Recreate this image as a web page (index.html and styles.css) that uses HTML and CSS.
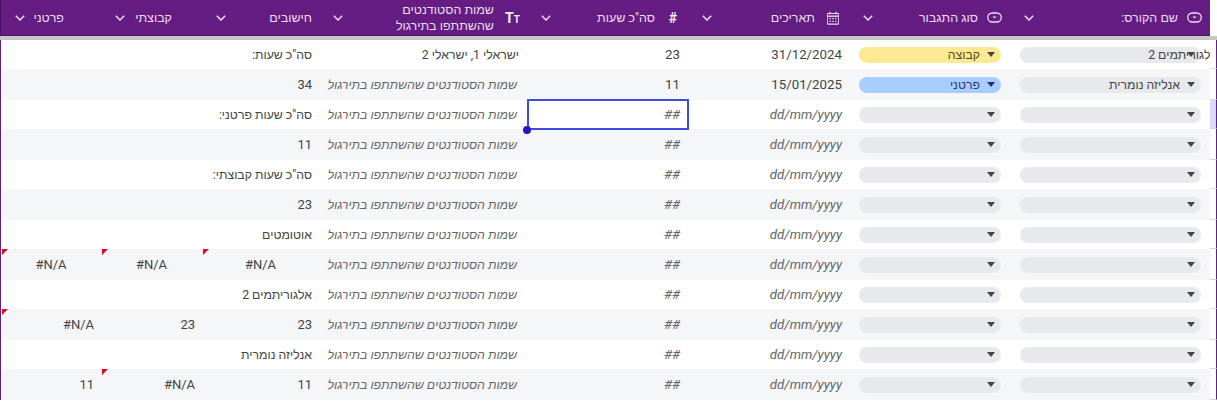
FILE: index.html
```html
<!DOCTYPE html>
<html lang="he" dir="rtl">
<head>
    <meta charset="UTF-8">
    <title>סיכום תירגולים</title>
    <link rel="stylesheet" href="styles.css">
</head>
<body>
    <svg class="defs" width="0" height="0">
        <symbol id="pick" viewBox="0 0 15 11"><rect x="0.75" y="1" width="13.5" height="9" rx="4.5" fill="none" stroke="currentColor" stroke-width="1.3"/><path d="M5.5 4.4h4L7.5 6.6z" fill="currentColor"/></symbol>
        <symbol id="cal" viewBox="0 0 12 14"><path d="M1 2.5h10a.8.8 0 0 1 .8.8v9a.8.8 0 0 1-.8.8H1a.8.8 0 0 1-.8-.8v-9a.8.8 0 0 1 .8-.8z" fill="none" stroke="currentColor" stroke-width="1.1"/><path d="M.5 5.2h11" stroke="currentColor" stroke-width="1.4"/><path d="M3 .8v2.4M9 .8v2.4" stroke="currentColor" stroke-width="1.2"/><path d="M2.5 7h1.4v1.3H2.5zM5.3 7h1.4v1.3H5.3zM8.1 7h1.4v1.3H8.1zM2.5 9.7h1.4V11H2.5zM5.3 9.7h1.4V11H5.3zM8.1 9.7h1.4V11H8.1z" fill="currentColor"/></symbol>
        <symbol id="chev" viewBox="0 0 10 6"><path d="M.8.8 5 5 9.2.8" fill="none" stroke="currentColor" stroke-width="1.5"/></symbol>
    </svg>

    <div class="sheet">
        <div class="head">
            <div class="gutter-top"></div>
            <div class="th"><svg class="ico"><use href="#pick"/></svg><span class="th-text">שם הקורס:</span><svg class="chev"><use href="#chev"/></svg></div>
            <div class="th"><svg class="ico"><use href="#pick"/></svg><span class="th-text">סוג התגבור</span><svg class="chev"><use href="#chev"/></svg></div>
            <div class="th"><svg class="ico ico-cal"><use href="#cal"/></svg><span class="th-text">תאריכים</span><svg class="chev"><use href="#chev"/></svg></div>
            <div class="th"><b class="ico-text">#</b><span class="th-text">סה"כ שעות</span><svg class="chev"><use href="#chev"/></svg></div>
            <div class="th"><b class="ico-text" dir="ltr">T<small>T</small></b><span class="th-text th-wrap">שמות הסטודנטים<br>שהשתתפו בתירגול</span><svg class="chev"><use href="#chev"/></svg></div>
            <div class="th th-plain"><span class="th-text">חישובים</span><svg class="chev"><use href="#chev"/></svg></div>
            <div class="th th-group"><span class="th-text">קבוצתי</span><svg class="chev"><use href="#chev"/></svg></div>
            <div class="th th-solo"><span class="th-text">פרטני</span><svg class="chev"><use href="#chev"/></svg></div>
        </div>
        <div class="band"></div>

        <div class="row">
            <div class="gutter"></div>
            <div class="td"><div class="pill"><i class="caret"></i><span class="pill-text pill-over">אלגוריתמים 2</span></div></div>
            <div class="td"><div class="pill pill-yellow"><i class="caret"></i><span class="pill-text">קבוצה</span></div></div>
            <div class="td num date">31/12/2024</div>
            <div class="td num">23</div>
            <div class="td names">ישראלי 1, ישראלי 2</div>
            <div class="td">סה"כ שעות:</div>
            <div class="td"></div>
            <div class="td"></div>
        </div>
        <div class="row">
            <div class="gutter"></div>
            <div class="td"><div class="pill"><i class="caret"></i><span class="pill-text">אנליזה נומרית</span></div></div>
            <div class="td"><div class="pill pill-blue"><i class="caret"></i><span class="pill-text">פרטני</span></div></div>
            <div class="td num date">15/01/2025</div>
            <div class="td num">11</div>
            <div class="td names hint">שמות הסטודנטים שהשתתפו בתירגול</div>
            <div class="td val">34</div>
            <div class="td"></div>
            <div class="td"></div>
        </div>
        <div class="row">
            <div class="gutter gutter-active"></div>
            <div class="td"><div class="pill"><i class="caret"></i></div></div>
            <div class="td"><div class="pill"><i class="caret"></i></div></div>
            <div class="td num date hint">dd/mm/yyyy</div>
            <div class="td num hint selected">##<i class="handle"></i></div>
            <div class="td names hint">שמות הסטודנטים שהשתתפו בתירגול</div>
            <div class="td">סה"כ שעות פרטני:</div>
            <div class="td"></div>
            <div class="td"></div>
        </div>
        <div class="row">
            <div class="gutter"></div>
            <div class="td"><div class="pill"><i class="caret"></i></div></div>
            <div class="td"><div class="pill"><i class="caret"></i></div></div>
            <div class="td num date hint">dd/mm/yyyy</div>
            <div class="td num hint">##</div>
            <div class="td names hint">שמות הסטודנטים שהשתתפו בתירגול</div>
            <div class="td val">11</div>
            <div class="td"></div>
            <div class="td"></div>
        </div>
        <div class="row">
            <div class="gutter"></div>
            <div class="td"><div class="pill"><i class="caret"></i></div></div>
            <div class="td"><div class="pill"><i class="caret"></i></div></div>
            <div class="td num date hint">dd/mm/yyyy</div>
            <div class="td num hint">##</div>
            <div class="td names hint">שמות הסטודנטים שהשתתפו בתירגול</div>
            <div class="td">סה"כ שעות קבוצתי:</div>
            <div class="td"></div>
            <div class="td"></div>
        </div>
        <div class="row">
            <div class="gutter"></div>
            <div class="td"><div class="pill"><i class="caret"></i></div></div>
            <div class="td"><div class="pill"><i class="caret"></i></div></div>
            <div class="td num date hint">dd/mm/yyyy</div>
            <div class="td num hint">##</div>
            <div class="td names hint">שמות הסטודנטים שהשתתפו בתירגול</div>
            <div class="td val">23</div>
            <div class="td"></div>
            <div class="td"></div>
        </div>
        <div class="row">
            <div class="gutter"></div>
            <div class="td"><div class="pill"><i class="caret"></i></div></div>
            <div class="td"><div class="pill"><i class="caret"></i></div></div>
            <div class="td num date hint">dd/mm/yyyy</div>
            <div class="td num hint">##</div>
            <div class="td names hint">שמות הסטודנטים שהשתתפו בתירגול</div>
            <div class="td">אוטומטים</div>
            <div class="td"></div>
            <div class="td"></div>
        </div>
        <div class="row">
            <div class="gutter"></div>
            <div class="td"><div class="pill"><i class="caret"></i></div></div>
            <div class="td"><div class="pill"><i class="caret"></i></div></div>
            <div class="td num date hint">dd/mm/yyyy</div>
            <div class="td num hint">##</div>
            <div class="td names hint">שמות הסטודנטים שהשתתפו בתירגול</div>
            <div class="td val err center"><bdi>#N/A</bdi></div>
            <div class="td val err center"><bdi>#N/A</bdi></div>
            <div class="td val err center"><bdi>#N/A</bdi></div>
        </div>
        <div class="row">
            <div class="gutter"></div>
            <div class="td"><div class="pill"><i class="caret"></i></div></div>
            <div class="td"><div class="pill"><i class="caret"></i></div></div>
            <div class="td num date hint">dd/mm/yyyy</div>
            <div class="td num hint">##</div>
            <div class="td names hint">שמות הסטודנטים שהשתתפו בתירגול</div>
            <div class="td">אלגוריתמים 2</div>
            <div class="td"></div>
            <div class="td"></div>
        </div>
        <div class="row">
            <div class="gutter"></div>
            <div class="td"><div class="pill"><i class="caret"></i></div></div>
            <div class="td"><div class="pill"><i class="caret"></i></div></div>
            <div class="td num date hint">dd/mm/yyyy</div>
            <div class="td num hint">##</div>
            <div class="td names hint">שמות הסטודנטים שהשתתפו בתירגול</div>
            <div class="td val">23</div>
            <div class="td val">23</div>
            <div class="td val err"><bdi>#N/A</bdi></div>
        </div>
        <div class="row">
            <div class="gutter"></div>
            <div class="td"><div class="pill"><i class="caret"></i></div></div>
            <div class="td"><div class="pill"><i class="caret"></i></div></div>
            <div class="td num date hint">dd/mm/yyyy</div>
            <div class="td num hint">##</div>
            <div class="td names hint">שמות הסטודנטים שהשתתפו בתירגול</div>
            <div class="td">אנליזה נומרית</div>
            <div class="td"></div>
            <div class="td"></div>
        </div>
        <div class="row">
            <div class="gutter"></div>
            <div class="td"><div class="pill"><i class="caret"></i></div></div>
            <div class="td"><div class="pill"><i class="caret"></i></div></div>
            <div class="td num date hint">dd/mm/yyyy</div>
            <div class="td num hint">##</div>
            <div class="td names hint">שמות הסטודנטים שהשתתפו בתירגול</div>
            <div class="td val">11</div>
            <div class="td val err"><bdi>#N/A</bdi></div>
            <div class="td val">11</div>
        </div>
    </div>
</body>
</html>
```

FILE: styles.css
```css
* {
    box-sizing: border-box;
}

html, body {
    margin: 0;
    height: 401px;
    overflow: hidden;
    background: white;
}

body {
    font-family: Roboto, "Liberation Sans", sans-serif;
    font-size: 12.3px;
    color: #444;
}

bdi {
    direction: ltr;
}

.defs {
    position: absolute;
}

.sheet {
    width: 1217px;
}

.head, .row {
    display: grid;
    grid-template-columns: 7px 200px 161px 161px 161px 208px 117px 101px 101px;
}

/* header */
.head {
    height: 36px;
}

.gutter-top {
    background: white;
}

.th {
    display: flex;
    align-items: center;
    padding-right: 8px;
    padding-left: 14px;
    background: #651c83;
    border-bottom: 1px solid #4a1261;
    color: #eadfee;
    font-size: 12.5px;
}

.th-text {
    white-space: nowrap;
    line-height: 16px;
}

.th-plain {
    padding-right: 7px;
}

.th-group {
    padding-right: 30px;
}

.th-solo {
    padding-right: 37px;
    border-left: 1px solid #4a1261;
}

.ico {
    width: 15px;
    height: 11px;
    margin-left: 9px;
    flex: none;
}

.ico-cal {
    width: 12px;
    height: 14px;
    margin-right: 2px;
    margin-left: 12px;
}

.ico-text {
    width: 14px;
    margin-left: 11px;
    flex: none;
    font-size: 14px;
    text-align: center;
    color: #f3edf5;
}

.ico-text small {
    font-size: 10px;
}

.chev {
    width: 10px;
    height: 6px;
    margin-right: auto;
    flex: none;
}

.band {
    height: 4px;
    background: #c6c6c6;
}

/* rows */
.row {
    height: 29px;
    background: white;
}

.row:nth-of-type(even) {
    height: 31px;
    background: #f5f6f8;
}

.gutter {
    background: white;
    border-right: 1px solid #651c83;
    border-bottom: 1px solid #d8d8d8;
}

.gutter-active {
    background: #d5ddfa;
}

.td {
    position: relative;
    display: flex;
    align-items: center;
    min-width: 0;
    overflow: hidden;
    padding: 0 7px;
    white-space: nowrap;
}

.td:last-child {
    border-left: 1px solid #651c83;
}

.val {
    font-size: 13px;
}

.num {
    padding-right: 8px;
    font-size: 13.3px;
}

.date {
    padding-right: 7px;
}

.names {
    padding-right: 8px;
}

.names.hint {
    padding-right: 10px;
}

.hint {
    color: #666;
    font-style: italic;
}

.center {
    justify-content: center;
}

.err {
    overflow: visible;
}

.err::before {
    content: "";
    position: absolute;
    top: 0;
    left: 1px;
    border-top: 6px solid #e8001c;
    border-right: 6px solid transparent;
}

/* dropdown pills */
.pill {
    display: flex;
    align-items: center;
    width: 100%;
    height: 16px;
    margin: 0 2px 0 3px;
    padding-right: 6px;
    border-radius: 8px;
    background: #e8e9ec;
}

.pill-yellow {
    background: #fde992;
    color: #5b4a10;
}

.pill-blue {
    background: #a8cdfe;
    color: #2c3a80;
}

.caret {
    flex: none;
    width: 0;
    height: 0;
    border-top: 5px solid #444;
    border-left: 4.5px solid transparent;
    border-right: 4.5px solid transparent;
}

.pill-blue .caret {
    border-top-color: #2c2a80;
}

.pill-text {
    margin-right: 7px;
    white-space: nowrap;
}

.pill-over {
    margin-right: -31px;
}

/* selected cell */
.selected {
    overflow: visible;
}

.selected::after {
    content: "";
    position: absolute;
    inset: -1px -1px -1px 0;
    border: 2px solid #3d4de0;
}

.handle {
    position: absolute;
    left: -4px;
    bottom: -5px;
    z-index: 1;
    width: 8px;
    height: 8px;
    border-radius: 50%;
    background: #2b12cc;
}
```
